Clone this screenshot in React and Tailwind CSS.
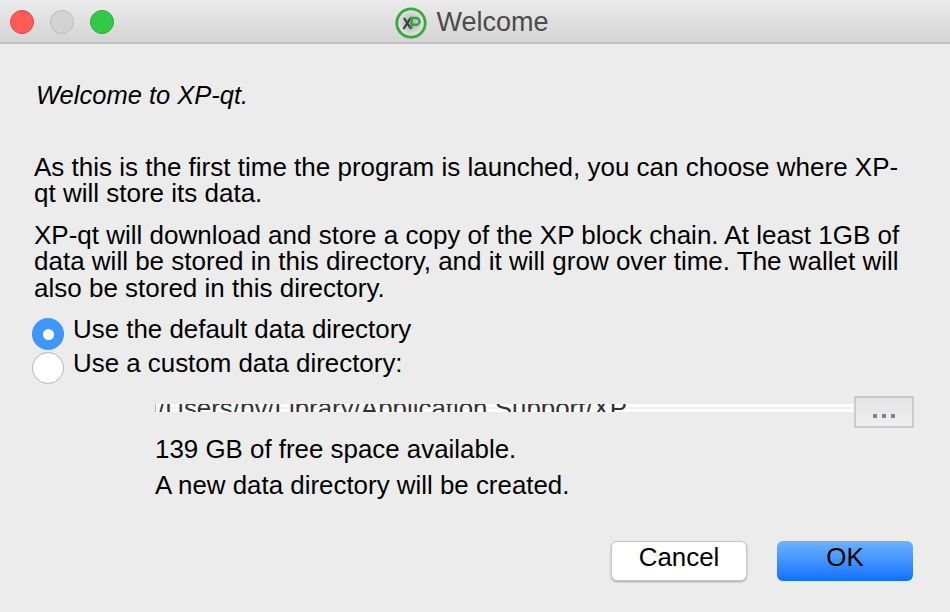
const font = { fontFamily: '"Liberation Sans", Arial, sans-serif' }

function XpLogo() {
  return (
    <svg width="32" height="32" viewBox="0 0 32 32" className="shrink-0">
      <defs>
        <radialGradient id="xpFace">
          <stop offset="0" stopColor="#a9aca9" />
          <stop offset="1" stopColor="#e9ebe8" />
        </radialGradient>
      </defs>
      <circle cx="16" cy="16" r="14.2" fill="url(#xpFace)" stroke="#38a83f" strokeWidth="2.8" />
      <path d="M9 11l7 11M15.5 11L8.5 22" stroke="#3a3d3e" strokeWidth="2.2" fill="none" />
      <path d="M16.5 21.5V11h4.6a3.3 3.3 0 010 6.8h-4.6" stroke="#3a9f41" strokeWidth="2.4" fill="none" />
    </svg>
  )
}

function Radio({ checked }) {
  if (checked) {
    return (
      <span className="w-8 h-8 shrink-0 rounded-full bg-[#3f96fb] flex items-center justify-center">
        <span className="w-[11px] h-[11px] rounded-full bg-white" />
      </span>
    )
  }
  return <span className="w-8 h-8 shrink-0 rounded-full bg-white border border-[#b5b5b5]" />
}

export default function App() {
  return (
    <div className="w-[950px] h-[612px] bg-[#ececec] text-black overflow-hidden text-[25.9px] leading-[26.5px]" style={font}>
      <div className="relative h-[44px] flex items-center justify-center gap-[9px] pr-[6px] pt-[3px] bg-gradient-to-b from-[#ebebeb] to-[#d4d4d4] border-b-2 border-[#c0c0c0]">
        <div className="absolute left-[10px] top-[10px] flex gap-4">
          <span className="w-6 h-6 rounded-full bg-[#fc5b57] border border-[#e2463f]" />
          <span className="w-6 h-6 rounded-full bg-[#d3d3d3] border border-[#bcbcbc]" />
          <span className="w-6 h-6 rounded-full bg-[#34c84a] border border-[#2dac2f]" />
        </div>
        <XpLogo />
        <span className="text-[#4b4b4b] text-[27px]">Welcome</span>
      </div>

      <div className="px-[34px]">
        <p className="italic mt-[38px] ml-[2px] text-[25.5px]">Welcome to XP-qt.</p>
        <p className="mt-[45px] text-[26px]">As this is the first time the program is launched, you can choose where XP-<br />qt will store its data.</p>
        <p className="mt-[15px] text-[26px]">XP-qt will download and store a copy of the XP block chain. At least 1GB of<br />data will be stored in this directory, and it will grow over time. The wallet will<br />also be stored in this directory.</p>

        <div className="mt-[17px] -ml-[2px] flex flex-col gap-[2px]">
          <div className="flex items-start gap-[9px]">
            <Radio checked />
            <span className="-mt-[2px]">Use the default data directory</span>
          </div>
          <div className="flex items-start gap-[9px]">
            <Radio />
            <span className="-mt-[2px]">Use a custom data directory:</span>
          </div>
        </div>

        <div className="ml-[121px] -mr-[-2px] mt-[12px] flex items-start">
          <div className="mt-[8px] flex-1 h-[8px] bg-[linear-gradient(#fff_0_3px,#f1f1f1_3px_5px,#fff_5px)] border-l border-[#b5b5b5] overflow-hidden flex items-center text-[#333] whitespace-nowrap">
            <span className="pl-[2px]">/Users/bv/Library/Application Support/XP</span>
          </div>
          <div className="w-[60px] h-[32px] border-2 border-[#cbcbcb] bg-gradient-to-b from-[#e4e4e4] to-[#efefef] flex items-center justify-center gap-[5px] pt-[8px]">
            <span className="w-[4px] h-[4px] bg-[#7f8288]" />
            <span className="w-[4px] h-[4px] bg-[#7f8288]" />
            <span className="w-[4px] h-[4px] bg-[#7f8288]" />
          </div>
        </div>

        <p className="ml-[121px] mt-[8px]">139 GB of free space available.</p>
        <p className="ml-[121px] mt-[9.5px]">A new data directory will be created.</p>

        <div className="mt-[42.5px] flex justify-end gap-[30px] pr-[3px]">
          <button className="w-[136px] h-[40px] pb-[8px] bg-white rounded-[6px] border border-[#c8c8c8] shadow-[0_1px_2px_rgba(0,0,0,0.3)]">Cancel</button>
          <button className="w-[136px] h-[40px] pb-[8px] rounded-[6px] bg-gradient-to-b from-[#6cb3fa] to-[#106ffd]">OK</button>
        </div>
      </div>
    </div>
  )
}
